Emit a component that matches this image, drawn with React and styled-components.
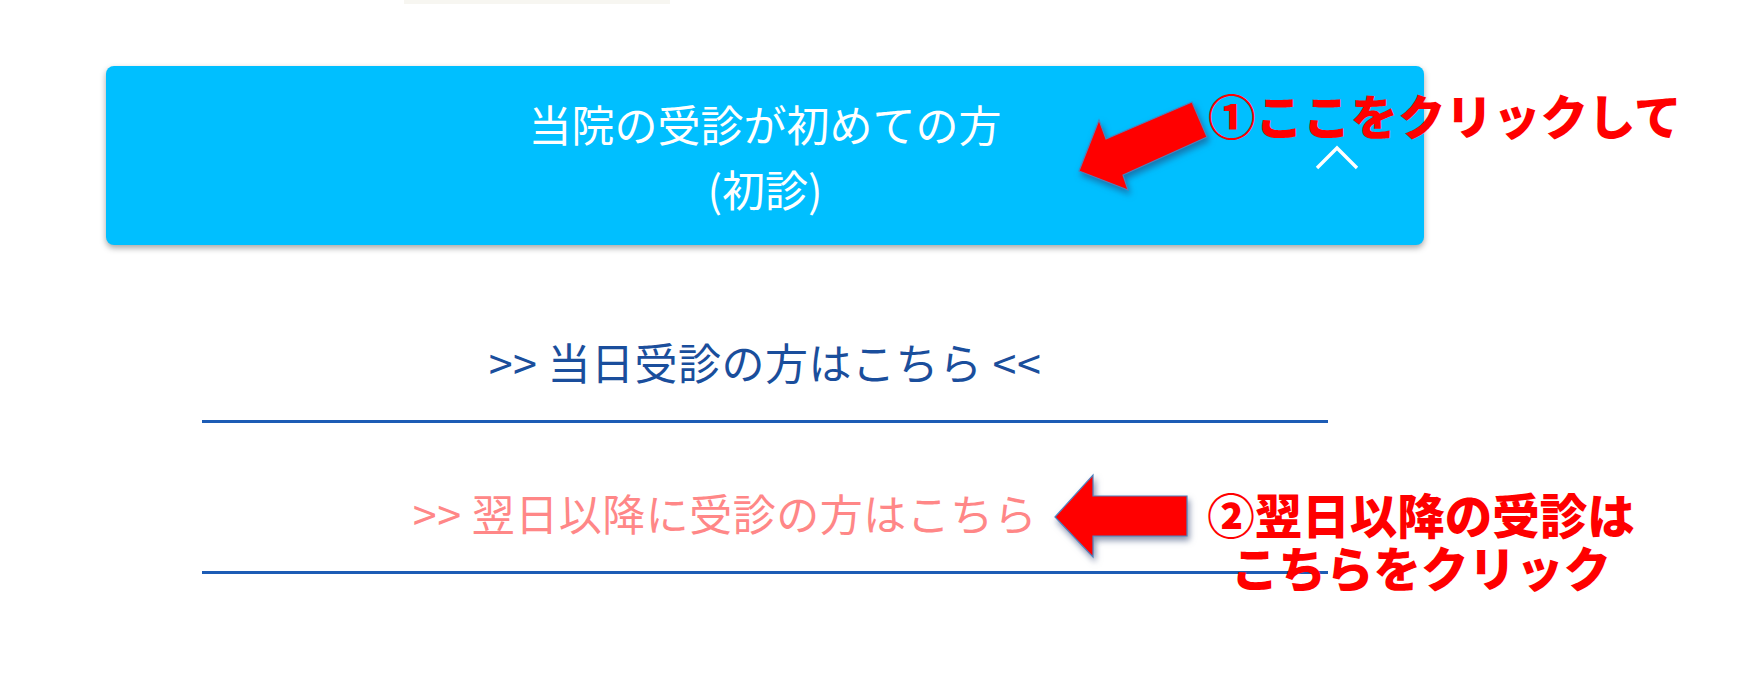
import styled, { createGlobalStyle } from "styled-components";

const GlobalStyle = createGlobalStyle`
  html,
  body {
    margin: 0;
    padding: 0;
    background: #ffffff;
  }
  body {
    font-family: "Noto Sans CJK JP", "Noto Sans", sans-serif;
  }
`;

const Page = styled.div`
  position: relative;
  width: 1750px;
  height: 683px;
  overflow: hidden;
  background: #ffffff;
`;

// bottom edge of the previous block, barely visible
const PrevTab = styled.div`
  margin-left: 404px;
  width: 266px;
  height: 4px;
  background: #f7f6f1;
`;

const Column = styled.div`
  width: 1318px;
  margin-left: 106px;
  display: flex;
  flex-direction: column;
`;

const AccordionHeader = styled.button`
  position: relative;
  margin-top: 62px;
  height: 179px;
  border: none;
  border-radius: 8px;
  background: #00bfff;
  box-shadow: 0 3px 6px rgba(0, 0, 0, 0.35);
  color: #ffffff;
  font-family: "Noto Sans CJK JP", sans-serif;
  font-size: 43px;
  line-height: 65px;
  display: flex;
  flex-direction: column;
  align-items: center;
  justify-content: center;
  cursor: pointer;
`;

const Chevron = styled.svg`
  position: absolute;
  right: 64px;
  top: 79px;
  width: 46px;
  height: 26px;
  filter: blur(0.6px);
`;

const LinkItem = styled.a`
  display: block;
  margin: ${(p) => p.$gap}px 96px 0;
  padding: 0 ${(p) => p.$trail || 0}px 31px 0;
  border-bottom: 3px solid #1d5cb5;
  text-align: center;
  font-size: 43px;
  letter-spacing: 0.5px;
  line-height: 56px;
  color: ${(p) => p.$color};
  text-decoration: none;
  white-space: nowrap;
`;

const Callout = styled.div`
  position: absolute;
  left: ${(p) => p.$x}px;
  top: ${(p) => p.$y}px;
  width: ${(p) => p.$w}px;
  color: #ff0000;
  font-family: "Noto Sans CJK JP", sans-serif;
  font-weight: 900;
  font-size: 47.5px;
  line-height: ${(p) => p.$lh}px;
  text-align: ${(p) => p.$align || "center"};
  white-space: nowrap;
`;

const ArrowSvg = styled.svg`
  position: absolute;
  overflow: visible;
  filter: drop-shadow(2px 4px 3px rgba(40, 60, 110, 0.55));
`;

const Arrow = ({ x, y, w, h, points }) => (
  <ArrowSvg
    style={{ left: x, top: y, width: w, height: h }}
    viewBox={`${x} ${y} ${w} ${h}`}
  >
    <polygon
      points={points}
      fill="#ff0000"
      stroke="#4f81bd"
      strokeWidth="1.2"
      strokeLinejoin="miter"
    />
  </ArrowSvg>
);

export default function App() {
  return (
    <Page>
      <GlobalStyle />
      <PrevTab />
      <Column>
        <AccordionHeader>
          <span>当院の受診が初めての方</span>
          <span>(初診)</span>
          <Chevron viewBox="0 0 46 26">
            <polyline
              points="3,23 23,3 43,23"
              fill="none"
              stroke="#ffffff"
              strokeWidth="3.4"
            />
          </Chevron>
        </AccordionHeader>
        <LinkItem href="#" $gap={88} $color="#1a4e9c">
          &gt;&gt; 当日受診の方はこちら &lt;&lt;
        </LinkItem>
        <LinkItem href="#" $gap={61} $trail={80} $color="#ff8787">
          &gt;&gt; 翌日以降に受診の方はこちら
        </LinkItem>
      </Column>

      <Arrow
        x={1070}
        y={95}
        w={150}
        h={105}
        points="1192,102 1207,137 1123,175 1128,190 1079,171 1099,120 1106,139"
      />
      <Callout $x={1208} $y={91} $w={480} $lh={47} $align="left">
        ①ここをクリックして
      </Callout>

      <Arrow
        x={1048}
        y={468}
        w={148}
        h={98}
        points="1055,517 1093,475 1093,496 1187,496 1187,536 1093,536 1093,557"
      />
      <Callout $x={1207} $y={487} $w={428} $lh={53}>
        ②翌日以降の受診は
        <br />
        こちらをクリック
      </Callout>
    </Page>
  );
}
